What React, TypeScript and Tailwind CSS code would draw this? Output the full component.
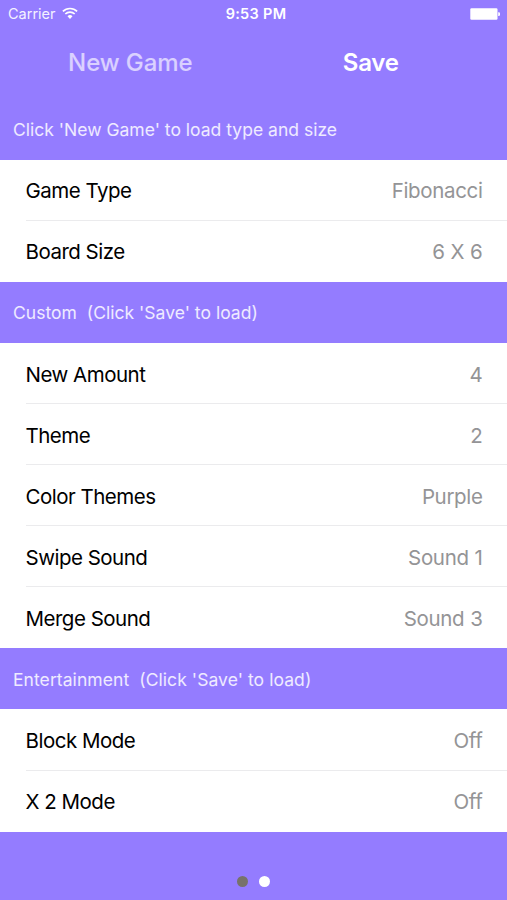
interface Setting {
  label: string;
  value: string;
}

interface Section {
  title: string;
  titleClass: string;
  rows: Setting[];
}

const sections: Section[] = [
  {
    title: "Click 'New Game' to load type and size",
    titleClass: 'tracking-[0.01px]',
    rows: [
      { label: 'Game Type', value: 'Fibonacci' },
      { label: 'Board Size', value: '6 X 6' },
    ],
  },
  {
    title: "Custom  (Click 'Save' to load)",
    titleClass: 'tracking-[0.02px]',
    rows: [
      { label: 'New Amount', value: '4' },
      { label: 'Theme', value: '2' },
      { label: 'Color Themes', value: 'Purple' },
      { label: 'Swipe Sound', value: 'Sound 1' },
      { label: 'Merge Sound', value: 'Sound 3' },
    ],
  },
  {
    title: "Entertainment  (Click 'Save' to load)",
    titleClass: 'tracking-[0.07px]',
    rows: [
      { label: 'Block Mode', value: 'Off' },
      { label: 'X 2 Mode', value: 'Off' },
    ],
  },
];

function WifiIcon() {
  return (
    <svg width="16" height="14" viewBox="0 0 16 14" fill="none" stroke="white" strokeWidth="1.7">
      <path d="M0.9 4.4a10.2 10.2 0 0 1 14.2 0" />
      <path d="M3.3 7a6.7 6.7 0 0 1 9.4 0" />
      <path d="M8 12 5.5 9.3a3.6 3.6 0 0 1 5 0z" fill="white" stroke="none" />
    </svg>
  );
}

function BatteryIcon() {
  return (
    <svg width="31" height="12" viewBox="0 0 31 12" fill="white">
      <rect x="0.3" y="0.2" width="27.2" height="11.6" rx="1.2" />
      <path d="M28.2 4.2h0.6a1.2 1.2 0 0 1 1.2 1.2v1.4a1.2 1.2 0 0 1-1.2 1.2h-0.6z" />
    </svg>
  );
}

function StatusBar() {
  return (
    <div className="grid h-[27px] grid-cols-3 items-center pl-[8px] pr-[6px] text-[14.5px] text-white">
      <div className="flex items-center gap-[6px]">
        <span className="opacity-90">Carrier</span>
        <WifiIcon />
      </div>
      <span className="pl-[3px] text-center text-[14.5px] font-semibold tracking-[0.3px]">9:53 PM</span>
      <div className="flex justify-end">
        <BatteryIcon />
      </div>
    </div>
  );
}

function SettingRow({ label, value, last }: Setting & { last: boolean }) {
  return (
    <div className="h-[61.1px] bg-white pl-[25.5px]">
      <div
        className={`flex h-full items-center justify-between pr-[24.5px] text-[20.5px] ${
          last ? 'pt-[2.5px]' : 'border-b border-[#ebebed] pt-[4px]'
        }`}
      >
        <span className="tracking-[-0.5px] text-black">{label}</span>
        <span className="tracking-[-0.35px] text-[#949496] [word-spacing:0.5px]">{value}</span>
      </div>
    </div>
  );
}

export default function App() {
  return (
    <div className="flex h-[900px] w-[507px] flex-col overflow-hidden bg-[#947cff] font-['Inter',sans-serif]">
      <StatusBar />
      <div className="grid h-[71.55px] grid-cols-2 text-center text-[24px] font-medium leading-[70px]">
        <button className="pl-[7px] tracking-[-0.1px] text-white/65">New Game</button>
        <button className="pr-[19px] font-semibold tracking-[-0.2px] text-white">Save</button>
      </div>
      {sections.map((section) => (
        <section key={section.title}>
          <h2
            className={`flex h-[61.1px] items-center whitespace-pre pl-[13px] pt-[2px] text-[17.5px] text-white/85 ${section.titleClass}`}
          >
            {section.title}
          </h2>
          {section.rows.map((row, i) => (
            <SettingRow key={row.label} {...row} last={i === section.rows.length - 1} />
          ))}
        </section>
      ))}
      <div className="flex flex-1 items-end justify-center gap-[11px] pb-[13px]">
        <span className="size-[11px] rounded-full bg-[#77726b]" />
        <span className="size-[11px] rounded-full bg-white" />
      </div>
    </div>
  );
}
